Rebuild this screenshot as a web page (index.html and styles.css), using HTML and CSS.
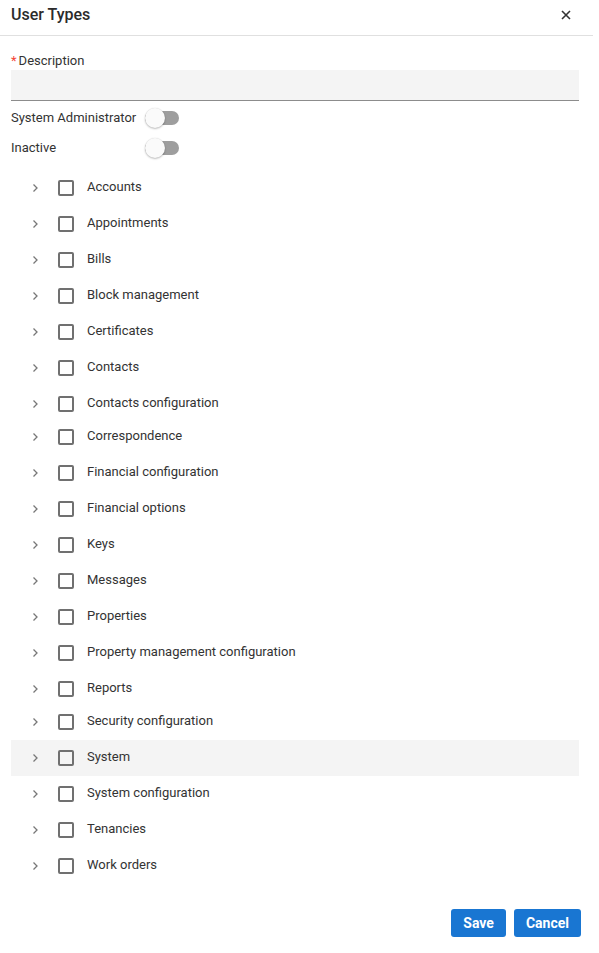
FILE: index.html
```html
<!DOCTYPE html>
<html lang="en">
<head>
<meta charset="utf-8">
<title>User Types</title>
<link rel="stylesheet" href="styles.css">
</head>
<body>
<div class="dialog">
  <div class="header">
    <h1 class="title">User Types</h1>
    <button class="close" aria-label="Close">
      <svg width="10" height="10" viewBox="0 0 10 10"><path d="M1 1L9 9M9 1L1 9" stroke="#333" stroke-width="1.6" fill="none"/></svg>
    </button>
  </div>
  <div class="content">
    <label class="field-label"><span class="req">*</span>Description</label>
    <div class="input"></div>
    <div class="toggles">
      <span class="toggle-label">System Administrator</span>
      <span class="toggle"><span class="track"></span><span class="thumb"></span></span>
      <span class="toggle-label">Inactive</span>
      <span class="toggle"><span class="track"></span><span class="thumb"></span></span>
    </div>
    <ul class="tree">
      <li class="row"><svg class="chev" viewBox="0 0 8 10"><path d="M2.5 1.5L6 5L2.5 8.5"/></svg><span class="cb"></span><span class="name">Accounts</span></li>
      <li class="row"><svg class="chev" viewBox="0 0 8 10"><path d="M2.5 1.5L6 5L2.5 8.5"/></svg><span class="cb"></span><span class="name">Appointments</span></li>
      <li class="row"><svg class="chev" viewBox="0 0 8 10"><path d="M2.5 1.5L6 5L2.5 8.5"/></svg><span class="cb"></span><span class="name">Bills</span></li>
      <li class="row"><svg class="chev" viewBox="0 0 8 10"><path d="M2.5 1.5L6 5L2.5 8.5"/></svg><span class="cb"></span><span class="name">Block management</span></li>
      <li class="row"><svg class="chev" viewBox="0 0 8 10"><path d="M2.5 1.5L6 5L2.5 8.5"/></svg><span class="cb"></span><span class="name">Certificates</span></li>
      <li class="row"><svg class="chev" viewBox="0 0 8 10"><path d="M2.5 1.5L6 5L2.5 8.5"/></svg><span class="cb"></span><span class="name">Contacts</span></li>
      <li class="row row--short"><svg class="chev" viewBox="0 0 8 10"><path d="M2.5 1.5L6 5L2.5 8.5"/></svg><span class="cb"></span><span class="name">Contacts configuration</span></li>
      <li class="row"><svg class="chev" viewBox="0 0 8 10"><path d="M2.5 1.5L6 5L2.5 8.5"/></svg><span class="cb"></span><span class="name">Correspondence</span></li>
      <li class="row"><svg class="chev" viewBox="0 0 8 10"><path d="M2.5 1.5L6 5L2.5 8.5"/></svg><span class="cb"></span><span class="name">Financial configuration</span></li>
      <li class="row"><svg class="chev" viewBox="0 0 8 10"><path d="M2.5 1.5L6 5L2.5 8.5"/></svg><span class="cb"></span><span class="name">Financial options</span></li>
      <li class="row"><svg class="chev" viewBox="0 0 8 10"><path d="M2.5 1.5L6 5L2.5 8.5"/></svg><span class="cb"></span><span class="name">Keys</span></li>
      <li class="row"><svg class="chev" viewBox="0 0 8 10"><path d="M2.5 1.5L6 5L2.5 8.5"/></svg><span class="cb"></span><span class="name">Messages</span></li>
      <li class="row"><svg class="chev" viewBox="0 0 8 10"><path d="M2.5 1.5L6 5L2.5 8.5"/></svg><span class="cb"></span><span class="name">Properties</span></li>
      <li class="row"><svg class="chev" viewBox="0 0 8 10"><path d="M2.5 1.5L6 5L2.5 8.5"/></svg><span class="cb"></span><span class="name">Property management configuration</span></li>
      <li class="row row--short"><svg class="chev" viewBox="0 0 8 10"><path d="M2.5 1.5L6 5L2.5 8.5"/></svg><span class="cb"></span><span class="name">Reports</span></li>
      <li class="row"><svg class="chev" viewBox="0 0 8 10"><path d="M2.5 1.5L6 5L2.5 8.5"/></svg><span class="cb"></span><span class="name">Security configuration</span></li>
      <li class="row row--hover"><svg class="chev" viewBox="0 0 8 10"><path d="M2.5 1.5L6 5L2.5 8.5"/></svg><span class="cb"></span><span class="name">System</span></li>
      <li class="row"><svg class="chev" viewBox="0 0 8 10"><path d="M2.5 1.5L6 5L2.5 8.5"/></svg><span class="cb"></span><span class="name">System configuration</span></li>
      <li class="row"><svg class="chev" viewBox="0 0 8 10"><path d="M2.5 1.5L6 5L2.5 8.5"/></svg><span class="cb"></span><span class="name">Tenancies</span></li>
      <li class="row"><svg class="chev" viewBox="0 0 8 10"><path d="M2.5 1.5L6 5L2.5 8.5"/></svg><span class="cb"></span><span class="name">Work orders</span></li>
    </ul>
  </div>
  <div class="actions">
    <button class="btn">Save</button>
    <button class="btn">Cancel</button>
  </div>
</div>
</body>
</html>
```

FILE: styles.css
```css
* { box-sizing: border-box; }
html, body { margin: 0; padding: 0; background: #fff; }
body { font-family: Roboto, "Liberation Sans", Arial, sans-serif; color: rgba(0,0,0,0.82); font-size: 13px; }

.dialog { width: 593px; }

.header {
  height: 36px;
  border-bottom: 1px solid #e0e0e0;
  display: flex;
  align-items: center;
  justify-content: space-between;
  padding: 0 22px 5px 11px;
}
.title { margin: 0; font-size: 16px; font-weight: 500; color: #2b2b2b; line-height: 20px; }
.close { border: 0; background: none; padding: 0; width: 10px; height: 10px; display: block; cursor: pointer; }
.close svg { display: block; }

.content { padding: 17px 14px 0 11px; }

.field-label { display: block; line-height: 16px; font-size: 13px; color: #333; }
.req { color: #f44336; margin-right: 2px; }

.input {
  margin-top: 1px;
  height: 31px;
  background: #f4f4f4;
  border-bottom: 1px solid #8c8c8c;
}

.toggles {
  display: grid;
  grid-template-columns: 134px auto;
  grid-auto-rows: 30px;
  align-items: center;
  justify-items: start;
  margin-top: 1px;
}
.toggle-label { color: #333; }
.toggle { position: relative; width: 34px; height: 20px; display: block; margin-top: 2px; }
.track { position: absolute; left: 0; top: 3px; width: 34px; height: 14px; border-radius: 7px; background: #9e9e9e; }
.thumb {
  position: absolute; left: 0; top: 0; width: 20px; height: 20px; border-radius: 50%;
  background: #fafafa;
  box-shadow: 0 1px 2px rgba(0,0,0,0.25), 0 0 1px rgba(0,0,0,0.15);
}

.tree { list-style: none; margin: 8px 0 0; padding: 0; }
.row { height: 36px; display: flex; align-items: flex-start; }
.row--short { height: 33px; }
.row--hover { background: #f4f4f4; }
.chev { width: 8px; height: 10px; margin-left: 20px; margin-top: 13px; fill: none; stroke: #777; stroke-width: 1.3; flex: none; }
.cb { width: 16px; height: 16px; border: 2px solid #707070; border-radius: 2px; margin-left: 19px; margin-top: 10px; flex: none; }
.name { margin-left: 13px; margin-top: 9px; line-height: 16px; color: #333; }

.actions {
  display: flex;
  justify-content: flex-end;
  gap: 8px;
  padding: 25px 12px 0 0;
}
.btn {
  height: 28px;
  border: 0;
  border-radius: 3px;
  background: #1976d2;
  color: #fff;
  font-family: Roboto, "Liberation Sans", Arial, sans-serif;
  font-weight: 700;
  font-size: 14px;
  padding: 0 12px;
}
```
